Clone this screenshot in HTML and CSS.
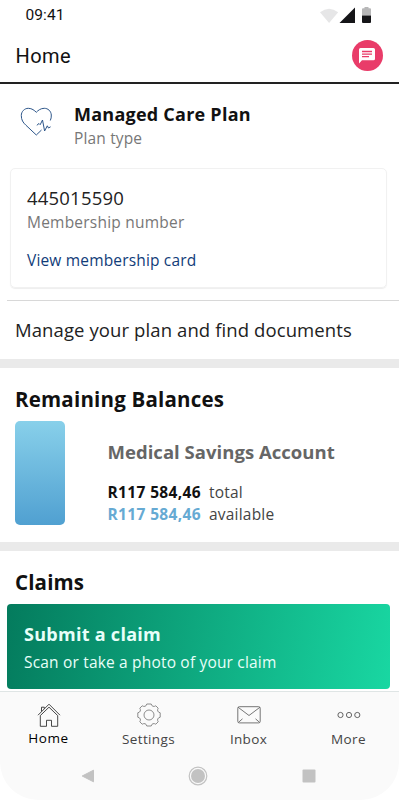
FILE: index.html
```html
<!DOCTYPE html>
<html lang="en">
<head>
<meta charset="utf-8">
<title>Home</title>
<link rel="stylesheet" href="styles.css">
</head>
<body>
<div class="screen">
  <div class="status">
    <span class="time">09:41</span>
    <svg class="signals" width="54" height="20" viewBox="0 0 54 20">
      <path d="M1 5.2Q10 -1.800 19.200 5.200L10.100 16Z" fill="#e6e6e7"/>
      <path d="M20.500 16L36 .5V16Z" fill="#151518"/>
      <path d="M43 2.200q0-1 1-1h1.500V0h4v1.200H51q1 0 1 1V8.600h-9z" fill="#b7b7b8"/>
      <path d="M43 8.600h9V15q0 1-1 1h-7q-1 0-1-1z" fill="#151518"/>
    </svg>
  </div>
  <header class="header">
    <h1 class="title">Home</h1>
    <div class="chat">
      <svg width="16" height="16" viewBox="0 0 16 16">
        <path d="M1.500 0H14.500Q16 0 16 1.500V10.700Q16 12.200 14.500 12.200H3L0 15.500V1.500Q0 0 1.500 0Z" fill="#fff"/>
        <path d="M3 3.500H13M3 6.100H13M3 8.700H10" stroke="#e93c69" stroke-width="1.300"/>
      </svg>
    </div>
  </header>
  <section class="plan">
    <div class="plan-head">
      <svg class="heart" width="34" height="32" viewBox="0 0 34 32" fill="none" stroke="#2d568a" stroke-width="1">
        <path d="M30.300 14.500Q31.500 12 31.300 9C31 5 28 2.300 24.300 2.300C20.500 2.300 18 4.500 16.300 6.300C14.500 4.500 12 2.300 8.300 2.300C4.500 2.300 1.300 5.500 1.300 9.500C1.300 14 3 16.500 6 19.300L16.300 29L21.500 24"/>
        <path d="M16.800 19.300L19 17.500L20.200 18.700L22.500 14L24.600 25L27.300 19.800L28.500 22L30.600 20.800"/>
      </svg>
      <div>
        <div class="plan-name">Managed Care Plan</div>
        <div class="plan-type">Plan type</div>
      </div>
    </div>
    <div class="card">
      <div class="number">445015590</div>
      <div class="number-label">Membership number</div>
      <div class="link">View membership card</div>
    </div>
  </section>
  <div class="manage"><span>Manage your plan and find documents</span></div>
  <section class="balances">
    <h2 class="heading">Remaining Balances</h2>
    <div class="account">
      <div class="gauge"></div>
      <div class="details">
        <div class="account-name">Medical Savings Account</div>
        <div class="amount"><b>R117 584,46</b><span>total</span></div>
        <div class="amount free"><b>R117 584,46</b><span>available</span></div>
      </div>
    </div>
  </section>
  <section class="claims">
    <h2 class="heading">Claims</h2>
    <div class="submit">
      <div class="submit-title">Submit a claim</div>
      <div class="submit-text">Scan or take a photo of your claim</div>
    </div>
  </section>
  <footer class="footer">
    <nav class="tabs">
      <div class="tab active">
        <svg width="24" height="24" viewBox="0 0 24 24" fill="none" stroke="#333" stroke-width=".9">
          <path d="M1 12.200L12 1.200L23 12.200M3.300 12.600L12 4.200L20.700 12.600V23.300H14.500V17.300H9.500V23.300H3.300V12.600M4.500 8.500V4.200H7.300V5.800"/>
        </svg>
        <span>Home</span>
      </div>
      <div class="tab">
        <svg width="24" height="24" viewBox="0 0 24 24" fill="none" stroke="#707070" stroke-width=".8">
          <circle cx="12" cy="12" r="5"/>
          <path d="M9.800 1H14.200Q14.600 2.900 16 3.300Q17.300 3.700 18.800 2.800L21.200 5.200Q20.300 6.700 20.700 8Q21.300 9.400 23.200 9.800V14.200Q21.300 14.600 20.700 16Q20.300 17.300 21.200 18.800L18.800 21.200Q17.300 20.300 16 20.700Q14.600 21.100 14.200 23H9.800Q9.400 21.100 8 20.700Q6.700 20.300 5.200 21.200L2.800 18.800Q3.700 17.300 3.300 16Q2.700 14.600 .8 14.200V9.800Q2.700 9.400 3.300 8Q3.700 6.700 2.800 5.200L5.200 2.800Q6.700 3.700 8 3.300Q9.400 2.900 9.800 1Z"/>
        </svg>
        <span>Settings</span>
      </div>
      <div class="tab">
        <svg width="24" height="24" viewBox="0 0 24 24" fill="none" stroke="#666" stroke-width=".9">
          <rect x=".8" y="3.700" width="22.400" height="16.200" rx="1.500"/>
          <path d="M1 4.200L12 12.500L23 4.200M1.500 19.300L5.500 15.800M22.500 19.300L18.500 15.800"/>
        </svg>
        <span>Inbox</span>
      </div>
      <div class="tab">
        <svg width="24" height="24" viewBox="0 0 24 24" fill="none" stroke="#555" stroke-width=".9">
          <circle cx="3.500" cy="12" r="2.600"/><circle cx="12" cy="12" r="2.600"/><circle cx="20.300" cy="12" r="2.600"/>
        </svg>
        <span>More</span>
      </div>
    </nav>
    <div class="system">
      <svg width="14" height="14" viewBox="0 0 14 14"><path d="M12.500 1.200V12.800L1.200 7Z" fill="#c2c2c2" stroke="#c2c2c2" stroke-linejoin="round"/></svg>
      <svg width="20" height="20" viewBox="0 0 20 20"><circle cx="10" cy="10" r="8.800" fill="none" stroke="#c2c2c2" stroke-width="1.200"/><circle cx="10" cy="10" r="7" fill="#c2c2c2"/></svg>
      <svg width="14" height="14" viewBox="0 0 14 14"><rect x=".5" y=".5" width="13" height="13" rx="1" fill="#c2c2c2"/></svg>
    </div>
  </footer>
</div>
</body>
</html>
```
FILE: styles.css
```css
* { box-sizing: border-box; }
body { margin: 0; background: #fff; font-family: "Open Sans", sans-serif; color: #111; }
h1, h2 { margin: 0; }
svg { display: block; flex: none; }
.screen { width: 398.500px; height: 800px; overflow: hidden; display: flex; flex-direction: column; white-space: nowrap; }
.screen > * { flex: none; }
.status { height: 28px; padding: 5px 26px 0 25.500px; display: flex; justify-content: space-between; font: 400 15.500px/20px Roboto, sans-serif; letter-spacing: .1px; }
.signals { margin-top: 2px; }
.header { height: 56px; padding: 0 16px 2px 15.500px; display: flex; justify-content: space-between; align-items: center; border-bottom: 2px solid #222; }
.title { font: 400 20px/24px Roboto, sans-serif; letter-spacing: .45px; margin-top: 3px; }
.chat { width: 31px; height: 31px; border-radius: 50%; background: #e93c69; display: flex; align-items: center; justify-content: center; margin-top: 2px; padding-top: 1px; }
.plan { height: 216px; padding: 18px 12px 0 10px; }
.plan-head { display: flex; height: 66px; gap: 20px; padding: 0 0 0 10px; }
.heart { margin-top: 4px; }
.plan-name { font-size: 18px; font-weight: 700; line-height: 25px; letter-spacing: .24px; }
.plan-type { font-size: 15.500px; line-height: 22px; color: #777; letter-spacing: .15px; }
.card { height: 120px; border: 1px solid #f1f1f1; border-radius: 5px; box-shadow: 0 1px 1px #eee; padding: 17px 16px 0; }
.number { font-size: 18.500px; line-height: 24px; letter-spacing: .2px; color: #222; }
.number-label { font-size: 15.500px; line-height: 22px; color: #777; letter-spacing: .22px; margin-top: 1px; }
.link { font-size: 15.500px; line-height: 22px; color: #113c79; margin-top: 16px; letter-spacing: .17px; }
.manage { height: 68px; margin-left: 7px; padding: 16px 8px 0; border-top: 1px solid #d8d8d8; font-size: 18.500px; line-height: 26px; letter-spacing: .1px; color: #222; }
.balances { height: 183px; margin-top: -9px; }
.balances, .claims { border-top: 9px solid #eaeaea; }
.heading { font-size: 20.500px; line-height: 28px; font-weight: 700; padding-left: 15px; letter-spacing: .15px; }
.balances .heading { padding-top: 17px; letter-spacing: .2px; }
.account { display: flex; gap: 42.500px; padding-left: 15px; margin-top: 8px; }
.gauge { width: 50px; height: 104px; border-radius: 5px; background: linear-gradient(#88d0ea, #50a0d1); }
.details { padding-top: 18px; }
.account-name { font-size: 18.500px; line-height: 26px; font-weight: 700; color: #666; margin-bottom: 16px; letter-spacing: .03px; }
.amount { display: flex; gap: 8px; font-size: 15.500px; line-height: 22px; }
.amount b { letter-spacing: .36px; }
.amount span { color: #444; letter-spacing: .2px; }
.free b { color: #66aad3; }
.claims { height: 149px; }
.claims .heading { padding-top: 17px; }
.submit { width: 383px; height: 85px; margin: 8px 0 0 7px; border-radius: 4px; padding: 17px 17px 0; background: linear-gradient(100deg, #047b5d, #19d7a2); color: #e8fff9; }
.submit-title { font-size: 18px; line-height: 26px; font-weight: 700; letter-spacing: .28px; }
.submit-text { font-size: 15.500px; line-height: 22px; margin-top: 4px; letter-spacing: .18px; }
.footer { height: 109px; border-top: 1px solid #dfe5e5; border-radius: 0 0 38px 38px; background: #fafafa; }
.tabs { display: flex; height: 71.500px; margin-right: -1.500px; padding-top: 10.500px; }
.tab { width: 100px; padding-right: 3px; display: flex; flex-direction: column; align-items: center; font-size: 13.500px; line-height: 20px; color: #444; letter-spacing: .35px; }
.tab span { margin-top: 2px; }
.active { color: #000; letter-spacing: .55px; }
.active span { margin-top: 1px; }
.system { display: flex; justify-content: space-between; align-items: center; padding: 0 83px 0 81px; height: 25px; }
```
